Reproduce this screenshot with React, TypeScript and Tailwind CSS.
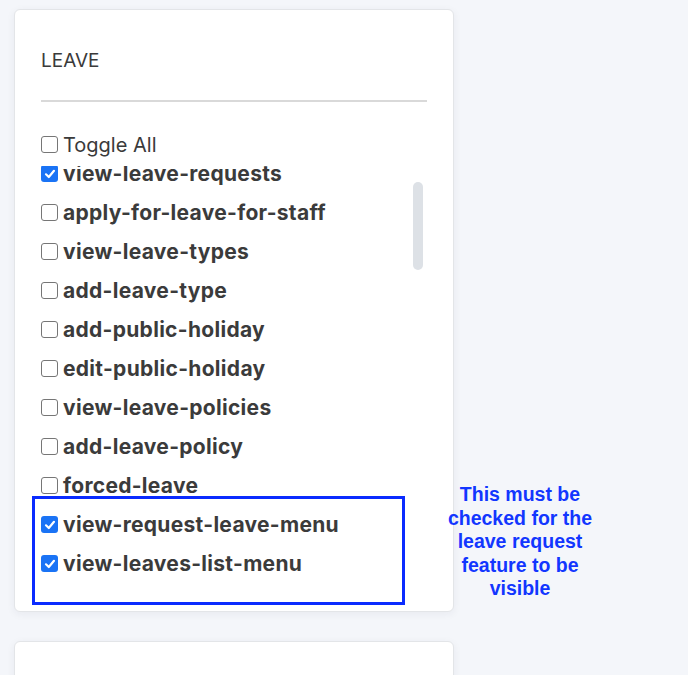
import React from 'react';

const permissions: { name: string; checked: boolean }[] = [
    { name: 'view-leave-requests', checked: true },
    { name: 'apply-for-leave-for-staff', checked: false },
    { name: 'view-leave-types', checked: false },
    { name: 'add-leave-type', checked: false },
    { name: 'add-public-holiday', checked: false },
    { name: 'edit-public-holiday', checked: false },
    { name: 'view-leave-policies', checked: false },
    { name: 'add-leave-policy', checked: false },
    { name: 'forced-leave', checked: false },
    { name: 'view-request-leave-menu', checked: true },
    { name: 'view-leaves-list-menu', checked: true },
];

const Box: React.FC<{ checked: boolean }> = ({ checked }) =>
    checked ? (
        <span className="w-[17px] h-[17px] shrink-0 rounded-[3px] bg-[#1a73f5] flex items-center justify-center">
            <svg width="12" height="12" viewBox="0 0 12 12" fill="none">
                <path d="M2 6.3 L4.8 9 L10 2.8" stroke="white" strokeWidth="2.2" strokeLinecap="round" strokeLinejoin="round" />
            </svg>
        </span>
    ) : (
        <span className="w-[17px] h-[17px] shrink-0 rounded-[3px] border border-[#767676] bg-white" />
    );

export default function App() {
    return (
        <div className="relative min-h-[675px] bg-[#f4f6fa] pt-[9px] pl-[14px] overflow-hidden" style={{ fontFamily: 'Inter, "Noto Sans", sans-serif' }}>
            <div className="w-[440px] h-[603px] bg-white border border-[#e3e5e8] rounded-[6px] shadow-[0_2px_8px_rgba(30,40,70,0.06)] px-[26px] pt-[37px]">
                <h2 className="text-[19px] leading-[28px] text-[#3a3a3a]">LEAVE</h2>
                <div className="mt-[25px] h-[2px] bg-[#d9d9d9]" />
                <div className="mt-[23px] h-[39px] flex items-center gap-[5px]">
                    <Box checked={false} />
                    <span className="text-[20px] text-[#3a3a3a]">Toggle All</span>
                </div>
                <div className="relative mt-[2px] h-[442px] overflow-hidden">
                    <div className="-mt-[12px]">
                        {permissions.map((p) => (
                            <div key={p.name} className="h-[39px] flex items-center gap-[5px]">
                                <Box checked={p.checked} />
                                <span className="text-[21px] font-bold text-[#3b3b3b] tracking-[0.3px]">{p.name}</span>
                            </div>
                        ))}
                    </div>
                    <div className="absolute right-[4px] top-[16px] w-[10px] h-[88px] rounded-full bg-[#dde1e6]" />
                </div>
            </div>
            <div className="mt-[29px] w-[440px] h-[60px] bg-white border border-[#e3e5e8] rounded-[6px] shadow-[0_2px_8px_rgba(30,40,70,0.06)]" />

            <div className="absolute left-[32px] top-[496px] w-[373px] h-[109px] border-[3px] border-[#0a2bff]" />
            <p
                className="absolute left-[435px] top-[483px] w-[170px] text-center text-[19.5px] leading-[23.5px] font-bold text-[#1236ff]"
                style={{ fontFamily: '"Liberation Sans", Arial, sans-serif' }}
            >
                This must be checked for the leave request feature to be visible
            </p>
        </div>
    );
}
